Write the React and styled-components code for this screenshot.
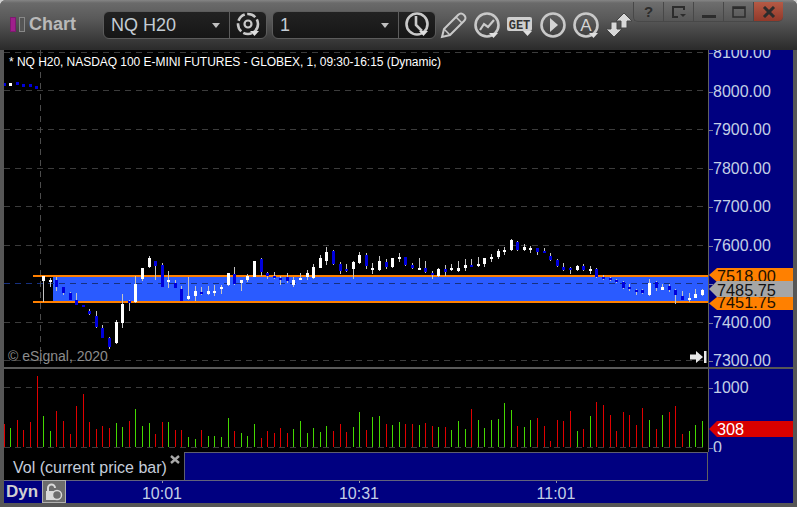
import React from 'react';
import styled, { createGlobalStyle } from 'styled-components';

const GlobalStyle = createGlobalStyle`
  html, body { margin: 0; padding: 0; background: #cfcfcf; }
  body { font-family: "Liberation Sans", Arial, sans-serif; }
`;

const Frame = styled.div`
  width: 797px;
  height: 507px;
  box-sizing: border-box;
  display: flex;
  flex-direction: column;
  overflow: hidden;
  position: relative;
  border-radius: 6px 6px 0 0;
  background: #565656;
  padding: 0 4px 4px 4px;
`;

const TitleBar = styled.div`
  height: 50px;
  margin: 0 -4px;
  padding: 11px 0 0 10px;
  box-sizing: border-box;
  flex: none;
  display: flex;
  align-items: flex-start;
  position: relative;
  background: linear-gradient(#858585 0, #6a6a6a 3px, #5a5a5a 18px, #2c2c2c 49px);
`;

const WindowMark = styled.span`
  width: 6px;
  height: 15px;
  margin: 6px 3px 0 0;
  box-sizing: border-box;
  background: ${({ $on }) => ($on ? '#a01f8c' : '#555')};
  border: 1px solid ${({ $on }) => ($on ? '#7d1a70' : '#888')};
`;

const WindowName = styled.span`
  font-size: 18px;
  font-weight: bold;
  line-height: 27px;
  color: #b9b9b9;
  width: 74px;
  margin-left: 1px;
`;

const ComboGroup = styled.div`
  height: 28px;
  width: 164px;
  margin-right: ${({ $gap }) => $gap}px;
  box-sizing: border-box;
  display: flex;
  border: 1px solid #5c5c5c;
  border-radius: 6px;
  background: linear-gradient(#222, #161616);
`;

const ComboText = styled.span`
  flex: 1;
  padding-left: 7px;
  font-size: 18px;
  line-height: 26px;
  color: #c4ccd4;
  position: relative;
  border-right: 1px solid #5c5c5c;
`;

const Caret = styled.i`
  position: absolute;
  right: 9px;
  top: 11px;
  border-left: 4.5px solid transparent;
  border-right: 4.5px solid transparent;
  border-top: 5px solid #c0c0c0;
`;

const ComboIcon = styled.span`
  width: 36px;
  display: flex;
  align-items: center;
  justify-content: center;
`;

const ToolIcon = styled.svg`
  width: 30px;
  height: 30px;
  flex: none;
  margin-right: ${({ $gap }) => $gap || 3}px;
  margin-top: ${({ $top }) => $top || 0}px;
`;

const WindowButtons = styled.div`
  position: absolute;
  top: 2px;
  left: 633px;
  display: flex;
`;

const WindowButton = styled.button`
  width: 30px;
  height: 20px;
  padding: 0;
  display: flex;
  align-items: center;
  justify-content: center;
  border: 1px solid #484848;
  border-top: none;
  border-right: none;
  background: ${({ $danger }) =>
    $danger ? 'linear-gradient(#b55a45, #92392a)' : 'linear-gradient(#6e6e6e, #565656)'};
  color: #2c2c2c;
  font: bold 15px "Liberation Sans", sans-serif;
  border-radius: ${({ $first, $last }) =>
    $first ? '0 0 0 5px' : $last ? '0 0 5px 0' : '0'};
`;

const Row = styled.div`
  display: flex;
  flex: none;
  height: ${({ $height }) => $height}px;
`;

const Pane = styled.div`
  width: 704px;
  flex: none;
  position: relative;
  background: #000;
  overflow: hidden;
`;

const ChartSvg = styled.svg`
  display: block;
`;

const ChartTitle = styled.div`
  position: absolute;
  left: 5px;
  top: 4px;
  color: #fff;
  font-size: 12px;
  letter-spacing: -0.04px;
  line-height: 16px;
  white-space: nowrap;
`;

const Copyright = styled.div`
  position: absolute;
  left: 4px;
  top: 298px;
  color: #8c8c8c;
  font-size: 14px;
  line-height: 17px;
`;

const GoEnd = styled.svg`
  position: absolute;
  left: 686px;
  top: 301px;
`;

const Axis = styled.div`
  flex: 1;
  position: relative;
  background: #000080;
  border-left: 1px solid #606060;
`;

const AxisScale = styled.div`
  height: ${({ $offset }) => `calc(100% + ${-$offset}px)`};
  overflow: hidden;
  margin-top: ${({ $offset }) => $offset}px;
`;

const AxisClip = styled.div`
  height: 100%;
  overflow: hidden;
`;

const AxisLabel = styled.div`
  height: ${({ $step }) => $step}px;
  line-height: ${({ $step }) => $step}px;
  padding-left: 4px;
  position: relative;
  font-size: 16px;
  color: #c3cfe6;
  &::before {
    content: '';
    position: absolute;
    left: 0;
    top: 50%;
    width: 4px;
    height: 1px;
    background: #7c7c9c;
  }
`;

const PriceTag = styled.div`
  position: absolute;
  left: 0;
  top: ${({ $top }) => $top}px;
  width: 84px;
  height: ${({ $height }) => $height}px;
  line-height: ${({ $line }) => $line}px;
  padding-left: 8px;
  box-sizing: border-box;
  overflow: hidden;
  font-size: 16.3px;
  color: ${({ $text }) => $text};
  background: ${({ $bg }) => $bg};
  clip-path: polygon(0 50%, 8px 0, 100% 0, 100% 100%, 8px 100%);
`;

const LegendPane = styled.div`
  width: 180px;
  flex: none;
  background: #000;
  position: relative;
  padding-left: 9px;
  box-sizing: border-box;
  color: #c5cddb;
  font-size: 16px;
  line-height: 31px;
  white-space: nowrap;
`;

const LegendClose = styled.svg`
  position: absolute;
  left: 166px;
  top: 3px;
`;

const LegendFill = styled.div`
  width: 524px;
  flex: none;
  box-sizing: border-box;
  background: #000080;
  border-top: 1px solid #5e5e70;
  border-left: 1px solid #5e5e70;
  border-right: 1px solid #606060;
`;

const NavyFill = styled.div`
  flex: 1;
  background: #000080;
`;

const TimeAxis = styled.div`
  width: 704px;
  flex: none;
  display: flex;
  box-sizing: border-box;
  background: #000080;
  border-top: 1px solid #62627c;
  height: 23px;
  padding-left: 2px;
`;

const DynLabel = styled.span`
  font-size: 17px;
  font-weight: bold;
  color: #d0d0d0;
  line-height: 22px;
  width: 36px;
`;

const LockBox = styled.span`
  width: 24px;
  height: 23px;
  margin-top: -1px;
  box-sizing: border-box;
  flex: none;
  border: 1px solid #b0b0b0;
  background: #6c6c6c;
  display: flex;
  align-items: center;
  justify-content: center;
`;

const TimeLabel = styled.span`
  width: 60px;
  margin-left: ${({ $gap }) => $gap}px;
  text-align: center;
  position: relative;
  font-size: 16px;
  line-height: 26px;
  color: #c3cfe6;
  &::before {
    content: '';
    position: absolute;
    left: 50%;
    top: 0;
    width: 1px;
    height: 2px;
    background: #8c8ca8;
  }
`;

const Divider = styled.div`
  height: 2px;
  width: 704px;
  background: #5a5a5a;
  flex: none;
`;

const barX = i => Math.floor(43.7 + 6.585 * i);

// rows: colour, body top, body bottom, wick top, wick bottom, read at 3x from y0
const W = '#fff', B = '#0000dc';
const candleRows = [
  [240, 0, [
    [W,108,122,108,185],[W,120,126,114,140],[B,120,140,111,152],[B,141,159,141,165],[B,158,178,155,180],
    [B,180,195,160,197],[B,195,201,195,201],[B,212,222,207,224],[B,228,262,213,264],[B,264,294,255,295],
    [B,294,322,291,327],[W,246,310,240,312],[W,192,249,162,264],[B,182,189,180,213],[W,132,186,108,188],
    [W,84,118,84,122],[W,54,82,48,84],[B,63,78,63,120],[B,75,141,69,141],[W,120,126,93,144],
    [B,129,144,120,144],[B,147,183,138,183],[W,168,177,110,180],[W,153,168,138,183],[B,156,162,141,165],
    [W,153,162,138,164],[W,153,159,135,168],[W,141,147,135,162],[W,99,135,99,138],[B,102,132,81,135],
    [W,120,129,120,153],[W,108,120,102,126],[W,63,111,63,111],[B,57,96,54,108],[B,99,108,96,117],
  ]],
  [230, 35, [
    [B,138,144,126,147],[B,144,150,138,165],[B,141,153,129,159],[W,150,165,141,171],[W,144,150,129,150],
    [W,129,141,120,150],[W,111,144,102,147],[W,84,114,75,114],[W,66,93,51,105],[B,63,102,60,105],
    [B,102,123,96,132],[B,117,123,102,126],[W,96,117,93,147],[W,75,99,66,102],[B,75,108,69,117],
    [W,114,120,99,132],[W,93,120,78,123],[B,96,111,87,117],[W,84,111,84,114],[W,81,87,69,96],
    [B,81,105,81,108],[B,105,114,99,117],[W,114,120,84,120],[B,114,126,93,129],[B,129,135,123,147],
    [W,117,138,114,141],[B,117,126,105,138],[W,114,120,102,123],[W,114,123,93,126],[W,105,114,87,123],
    [B,105,111,87,111],[W,102,108,81,111],[W,84,102,84,111],[W,81,87,72,96],[W,63,81,57,87],
    [W,60,66,51,75],[W,30,60,27,63],[B,36,60,33,63],[W,51,60,42,63],[W,54,60,48,69],[B,54,66,54,75],
  ]],
  [230, 76, [
    [B,63,69,54,69],[B,78,90,69,93],[B,90,108,87,111],[B,111,120,99,123],[B,114,120,111,132],
    [W,108,120,105,123],[B,108,120,102,123],[W,117,123,108,132],[B,117,141,114,144],[B,141,147,135,150],
    [B,144,150,141,153],[B,150,156,147,159],[B,156,174,153,177],[B,171,177,162,183],[B,180,186,177,195],
    [B,180,189,177,192],[W,159,195,147,198],[B,156,174,153,183],[W,171,180,162,180],[B,168,180,162,186],
    [B,180,195,177,222],[B,198,210,183,210],[W,204,210,189,216],[W,192,204,177,204],[W,180,195,177,198],
  ]],
];

const candles = candleRows.flatMap(([y0, start, rows]) =>
  rows.map(([fill, bt, bb, wt, wb], n) => ({
    x: barX(start + n),
    fill,
    bodyY: Math.round(y0 + bt / 3),
    bodyH: Math.max(2, Math.round((bb - bt) / 3)),
    wickY: Math.round(y0 + wt / 3),
    wickH: Math.round((wb - wt) / 3),
  })));

const earlyBars = [[4, 83, B], [10, 83, W], [17, 82, B], [23, 84, B], [30, 84, B], [36, 86, B]];

const R = '#e00000', G = '#44d800';
const volumeTops = [
  [R,177],[G,189],[R,165],[R,195],[R,171],[R,33],[G,153],[G,198],[R,138],[R,168],[R,207],[R,123],[R,87],[R,171],
  [R,192],[R,183],[R,189],[G,174],[G,186],[R,168],[G,132],[G,183],[G,174],[R,207],[R,171],[G,171],[R,195],[R,195],
  [G,216],[G,222],[R,195],[G,213],[G,213],[G,216],[G,159],[R,198],[G,204],[G,213],[G,177],[R,219],[R,198],
  [R,204],[R,189],[R,204],[G,192],[G,168],[G,204],[G,189],[G,201],[G,183],[R,198],[R,177],[R,201],[G,186],[G,141],
  [R,195],[G,156],[G,153],[R,177],[G,180],[G,171],[R,177],[R,177],[G,180],[R,174],[R,183],[G,186],[R,186],[G,195],
  [G,168],[G,192],[R,132],[G,165],[G,189],[G,165],[G,162],[G,114],[G,135],[R,183],[G,186],[G,165],[R,159],
  [R,183],[R,228],[R,165],[R,168],[R,138],[G,198],[R,192],[G,153],[R,111],[R,120],[R,150],[R,198],[R,141],[R,150],
  [R,180],[R,129],[G,165],[R,192],[G,150],[R,141],[R,123],[R,207],[G,198],[G,180],[G,168],
];

const priceGrid = [52, 90, 129, 168, 206, 245, 283, 322, 360];
const prices = ['8100.00', '8000.00', '7900.00', '7800.00', '7700.00', '7600.00', '7500.00', '7400.00', '7300.00'];

const IconCaret = ({ x = 20, y = 23 }) => <path d={`M${x} ${y}h9l-4.500 5z`} fill="#e0e0e0" />;

const Stroke = { fill: 'none', stroke: '#c9c9c9', strokeWidth: 2.6 };

function PriceChart() {
  return <ChartSvg width="704" height="317" viewBox="4 50 704 317" shapeRendering="crispEdges">
    <rect x="53" y="277" width="655" height="24" fill="#2a5bff" />
    {priceGrid.map(y =>
      <line key={y} x1="4" x2="708" y1={y + 0.5} y2={y + 0.5}
        stroke={y === 283 ? '#16307f' : '#3c3c3c'} strokeDasharray="6 5" />)}
    <line x1="40.500" x2="40.500" y1="50" y2="367" stroke="#4c4c4c" strokeDasharray="6 5" />
    <rect x="33" y="275" width="675" height="2" fill="#ff8000" />
    <rect x="33" y="301" width="675" height="2" fill="#ff8000" />
    {earlyBars.map(([x, y, fill]) => <rect key={x} x={x - 1} y={y} width="3" height="3" fill={fill} />)}
    {candles.map(c => <g key={c.x}>
      <rect x={c.x} y={c.wickY} width="1" height={c.wickH} fill="#c4c4c4" />
      <rect x={c.x - 1} y={c.bodyY} width="3" height={c.bodyH} fill={c.fill} />
    </g>)}
  </ChartSvg>;
}

function VolumeChart() {
  return <ChartSvg width="704" height="83" viewBox="4 369 704 83" shapeRendering="crispEdges">
    <line x1="4" x2="708" y1="387.500" y2="387.500" stroke="#3c3c3c" strokeDasharray="6 5" />
    <line x1="4" x2="708" y1="447.500" y2="447.500" stroke="#3c3c3c" strokeDasharray="6 5" />
    {volumeTops.map(([fill, top], n) => {
      let h = Math.round((246 - top) / 3);
      return <rect key={n} x={barX(n - 6)} y={447 - h} width="1" height={h} fill={fill} />;
    })}
  </ChartSvg>;
}

export default function App() {
  return <Frame>
    <GlobalStyle />
    <TitleBar>
      <WindowMark $on />
      <WindowMark />
      <WindowName>Chart</WindowName>
      <ComboGroup $gap={5}>
        <ComboText>NQ H20<Caret /></ComboText>
        <ComboIcon>
          <svg width="30" height="30" viewBox="0 0 30 30">
            <circle cx="15" cy="14" r="10" {...Stroke} strokeDasharray="9 2.500" />
            <circle cx="15" cy="14" r="3.500" {...Stroke} strokeWidth="2.200" />
            <IconCaret x={17} y={21} />
          </svg>
        </ComboIcon>
      </ComboGroup>
      <ComboGroup $gap={2}>
        <ComboText>1<Caret /></ComboText>
        <ComboIcon>
          <svg width="30" height="30" viewBox="0 0 30 30">
            <circle cx="15" cy="14" r="10.500" {...Stroke} />
            <path d="M14 6v9l6 6" {...Stroke} />
            <IconCaret x={17} y={21} />
          </svg>
        </ComboIcon>
      </ComboGroup>
      <ToolIcon $gap={4} $top={-1} viewBox="0 0 30 30">
        <path d="M4 27l2-8L20 5c2-2 4-2 6 0s2 4 0 6L12 25z" {...Stroke} strokeWidth="2" />
        <path d="M18 7l6 6M6 19l6 6" {...Stroke} strokeWidth="1.500" />
      </ToolIcon>
      <ToolIcon $gap={3} viewBox="0 0 30 30">
        <circle cx="15" cy="14" r="11.500" {...Stroke} />
        <path d="M8 19l4-6 4 3 6-7" {...Stroke} strokeWidth="2.200" />
        <IconCaret x={17} y={22} />
      </ToolIcon>
      <ToolIcon $gap={3} viewBox="0 0 30 30">
        <rect x="2" y="6" width="25" height="14" rx="2" fill="#cfcfcf" />
        <text x="14.500" y="17.500" textAnchor="middle" fontSize="12" fontWeight="bold"
          fontFamily="Liberation Mono, monospace" fill="#333">GET</text>
        <IconCaret x={18} y={20} />
      </ToolIcon>
      <ToolIcon $gap={3} viewBox="0 0 30 30">
        <circle cx="15" cy="14" r="11.500" {...Stroke} />
        <path d="M12 7l8 7-8 7z" fill="#d4d4d4" />
      </ToolIcon>
      <ToolIcon $gap={3} viewBox="0 0 30 30">
        <circle cx="15" cy="14" r="11.500" {...Stroke} />
        <text x="15" y="20" textAnchor="middle" fontSize="17" fontFamily="Liberation Sans, sans-serif"
          fill="#d4d4d4">A</text>
        <IconCaret x={18} y={22} />
      </ToolIcon>
      <ToolIcon viewBox="0 0 30 30">
        <path d="M20 2l8 8h-5v7h-6v-7h-5z" fill="#d8d8d8" stroke="#444" />
        <path d="M10 26l-8-8h5v-7h6v7h5z" fill="#d8d8d8" stroke="#444" />
      </ToolIcon>
      <WindowButtons>
        <WindowButton $first>?</WindowButton>
        <WindowButton>
          <svg width="16" height="14" viewBox="0 0 16 14">
            <path d="M13 5V2H2v10h5" fill="none" stroke="#2c2c2c" strokeWidth="2" />
            <path d="M9 9h6l-3 3z" fill="#2c2c2c" />
          </svg>
        </WindowButton>
        <WindowButton>
          <svg width="14" height="14" viewBox="0 0 14 14"><rect y="10" width="14" height="3" fill="#2c2c2c" /></svg>
        </WindowButton>
        <WindowButton>
          <svg width="14" height="12" viewBox="0 0 14 12">
            <path d="M1 1h12v10H1z" fill="none" stroke="#2c2c2c" strokeWidth="1.500" />
            <path d="M1 2h12" stroke="#2c2c2c" strokeWidth="2" />
          </svg>
        </WindowButton>
        <WindowButton $danger $last>
          <svg width="14" height="12" viewBox="0 0 14 12">
            <path d="M2 1l10 10M12 1L2 11" stroke="#2c2c2c" strokeWidth="3" />
          </svg>
        </WindowButton>
      </WindowButtons>
    </TitleBar>

    <Row $height={317}>
      <Pane>
        <PriceChart />
        <ChartTitle>* NQ H20, NASDAQ 100 E-MINI FUTURES - GLOBEX, 1, 09:30-16:15 (Dynamic)</ChartTitle>
        <Copyright>© eSignal, 2020</Copyright>
        <GoEnd width="18" height="12" viewBox="0 0 18 14" preserveAspectRatio="none">
          <path d="M0 4h6V0l7 7-7 7v-4H0z" fill="#e8e8e8" />
          <rect x="14" y="0" width="2.500" height="14" fill="#e8e8e8" />
        </GoEnd>
      </Pane>
      <Axis>
        <AxisClip>
          <AxisScale $offset={-16}>
            {prices.map(p => <AxisLabel key={p} $step={38.5}>{p}</AxisLabel>)}
          </AxisScale>
        </AxisClip>
        <PriceTag $top={218} $height={14} $line={17} $bg="#ff8000" $text="#1c1000">7518.00</PriceTag>
        <PriceTag $top={247} $height={13} $line={11} $bg="#ff8000" $text="#1c1000">7451.75</PriceTag>
        <PriceTag $top={231} $height={16} $line={18} $bg="#a6a6a6" $text="#111">7485.75</PriceTag>
      </Axis>
    </Row>
    <Divider />
    <Row $height={83}>
      <Pane><VolumeChart /></Pane>
      <Axis>
        <AxisClip>
          <AxisScale $offset={-11}>
            <AxisLabel $step={60}>1000</AxisLabel>
            <AxisLabel $step={60}>0</AxisLabel>
          </AxisScale>
        </AxisClip>
        <PriceTag $top={52} $height={16} $line={17} $bg="#d80000" $text="#fff">308</PriceTag>
      </Axis>
    </Row>
    <Row $height={28}>
      <LegendPane>
        Vol (current price bar)
        <LegendClose width="10" height="9" viewBox="0 0 10 9">
          <path d="M1 1l8 7M9 1L1 8" stroke="#a8a8a8" strokeWidth="2.400" />
        </LegendClose>
      </LegendPane>
      <LegendFill />
      <NavyFill />
    </Row>
    <Row $height={23}>
      <TimeAxis>
        <DynLabel>Dyn</DynLabel>
        <LockBox>
          <svg width="18" height="18" viewBox="0 0 18 18">
            <path d="M3 8V5a3.500 3.500 0 0 1 7 0" fill="none" stroke="#d8d8d8" strokeWidth="2" />
            <rect x="1" y="8" width="10" height="9" fill="#d8d8d8" />
            <circle cx="12" cy="12" r="4.500" fill="#6c6c6c" stroke="#d8d8d8" strokeWidth="1.500" />
          </svg>
        </LockBox>
        <TimeLabel $gap={66}>10:01</TimeLabel>
        <TimeLabel $gap={137}>10:31</TimeLabel>
        <TimeLabel $gap={137}>11:01</TimeLabel>
      </TimeAxis>
      <NavyFill />
    </Row>
  </Frame>;
}
